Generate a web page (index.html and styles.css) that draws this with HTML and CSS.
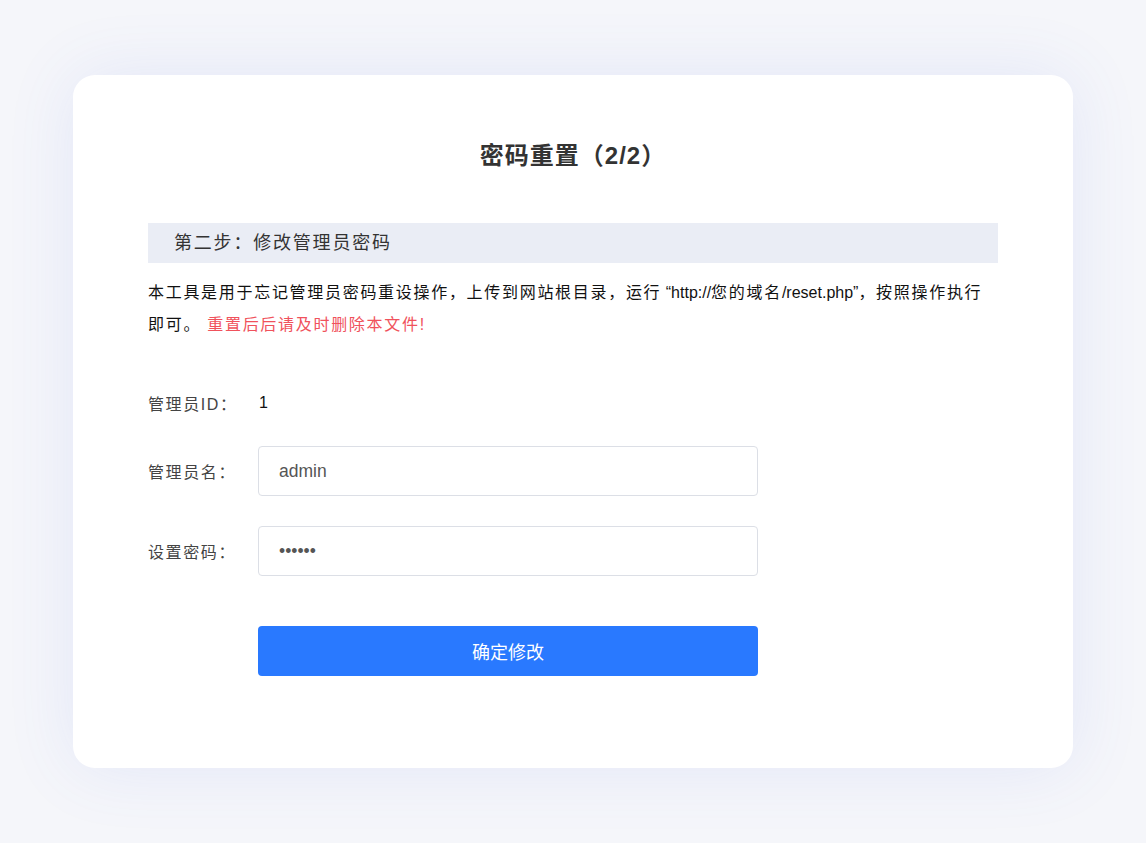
FILE: index.html
```html
<!DOCTYPE html>
<html lang="zh-CN">
<head>
    <meta charset="UTF-8">
    <title>密码重置</title>
    <link rel="stylesheet" href="styles.css">
</head>
<body>
    <div class="page">
        <div class="reset-card">
            <h1 class="title">密码重置（2/2）</h1>

            <div class="step-bar">第二步：修改管理员密码</div>

            <p class="notice">
                本工具是用于忘记管理员密码重设操作，上传到网站根目录，运行<span class="latin"> “http://</span>您的域名<span class="latin">/reset.php”</span>，按照操作执行即可。
                <span class="warn">重置后后请及时删除本文件!</span>
            </p>

            <form class="reset-form">
                <div class="form-row info-row">
                    <label class="form-label">管理员ID：</label>
                    <span class="form-value">1</span>
                </div>
                <div class="form-row">
                    <label class="form-label">管理员名：</label>
                    <input type="text" class="form-input" value="admin">
                </div>
                <div class="form-row">
                    <label class="form-label">设置密码：</label>
                    <input type="password" class="form-input" value="123456">
                </div>
                <div class="form-row submit-row">
                    <span class="form-label"></span>
                    <button type="button" class="submit-btn">确定修改</button>
                </div>
            </form>
        </div>
    </div>
</body>
</html>
```

FILE: styles.css
```css
* {
    margin: 0;
    padding: 0;
    box-sizing: border-box;
}

body {
    background: #f5f6fa;
    font-family: "Liberation Sans", "Noto Sans CJK SC", sans-serif;
    color: #333;
}

.page {
    padding: 75px 73px;
}

.reset-card {
    width: 1000px;
    height: 693px;
    background: #fff;
    border-radius: 22px;
    box-shadow: 0 0 70px rgba(80, 110, 230, 0.11);
    padding: 60px 75px 0;
}

.title {
    text-align: center;
    font-size: 24px;
    font-weight: bold;
    line-height: 42px;
    letter-spacing: 1px;
    color: #333;
    margin-bottom: 46px;
}

/* chinese text runs a bit wider than latin */
.latin {
    letter-spacing: 0;
}

/* Step header */
.step-bar {
    height: 40px;
    line-height: 40px;
    background: #eaedf5;
    padding-left: 26px;
    font-size: 18px;
    letter-spacing: 1.8px;
    color: #333;
}

.notice {
    margin-top: 14px;
    font-size: 16px;
    line-height: 32px;
    letter-spacing: 1.7px;
    color: #111;
}

.warn {
    color: #f0525c;
}

/* Form */
.reset-form {
    margin-top: 37px;
}

.form-row {
    display: flex;
    align-items: center;
    height: 50px;
    margin-bottom: 30px;
}

.info-row {
    margin-bottom: 18px;
}

.submit-row {
    margin-top: 50px;
}

.form-label {
    width: 110px;
    flex-shrink: 0;
    font-size: 16px;
    letter-spacing: 1.6px;
    color: #444;
}

.form-value {
    font-size: 16px;
    color: #111;
    padding-left: 1px;
}

.form-input {
    width: 500px;
    height: 50px;
    border: 1px solid #dcdfe6;
    border-radius: 4px;
    padding: 0 20px;
    font-family: inherit;
    font-size: 17.5px;
    color: #555;
    outline: none;
}

.submit-btn {
    width: 500px;
    height: 50px;
    border: none;
    border-radius: 4px;
    background: #2979ff;
    color: #fff;
    font-family: inherit;
    font-size: 18px;
    cursor: pointer;
}
```
